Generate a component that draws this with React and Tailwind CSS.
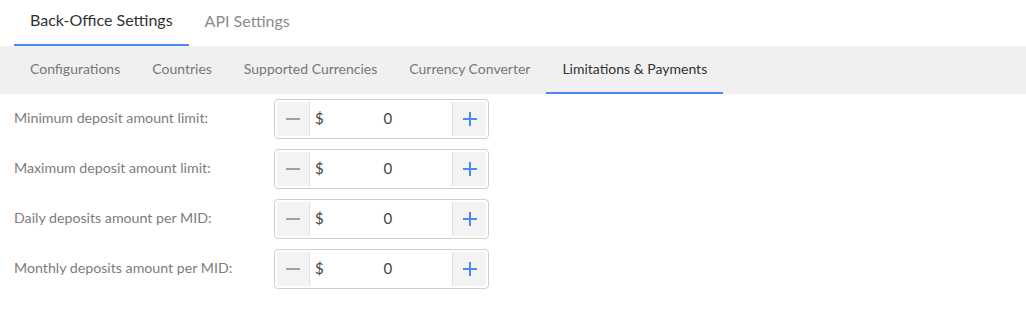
import React from "react";

const rows = [
  "Minimum deposit amount limit:",
  "Maximum deposit amount limit:",
  "Daily deposits amount per MID:",
  "Monthly deposits amount per MID:",
];

const subTabs = [
  "Configurations",
  "Countries",
  "Supported Currencies",
  "Currency Converter",
  "Limitations & Payments",
];

export default function App() {
  return (
    <div className="w-[1026px] h-[325px] bg-white font-['Lato',sans-serif]">
      <div className="flex px-[14px] h-[46px]">
        <div className="px-4 h-full flex items-center pb-[4px] border-b-2 border-[#4a89f3] text-[16px] text-[#333]">
          Back-Office Settings
        </div>
        <div className="px-4 h-full flex items-center pb-[4px] text-[16px] text-[#8a8a8a]">
          API Settings
        </div>
      </div>
      <div className="flex px-[14px] h-[48px] bg-[#f0f0f0]">
        {subTabs.map((t, i) => (
          <div
            key={t}
            className={
              i === 4
                ? "px-4 h-full flex items-center pb-[1px] border-b-2 border-[#4a89f3] text-[14px] text-[#333]"
                : "px-4 h-full flex items-center pb-[1px] border-b-2 border-transparent text-[14px] text-[#777]"
            }
          >
            {t}
          </div>
        ))}
      </div>
      <div className="flex flex-col gap-[10px] pt-[5px] pl-[14px]">
        {rows.map((r) => (
          <div key={r} className="flex items-center h-[40px]">
            <div className="w-[260px] text-[14.2px] text-[#7c7c7c] pb-[2px]">{r}</div>
            <div className="flex h-[40px] w-[215px] border border-[#cfcfcf] rounded-[4px] overflow-hidden p-[2px]">
              <div className="w-[33px] h-full bg-[#f3f3f3] border-r border-[#e2e2e2] flex items-center justify-center rounded-l-[2px]">
                <div className="w-[14px] h-[2px] bg-[#a0a0a0]" />
              </div>
              <div className="flex-1 flex items-center text-[15px] text-[#444] pl-[5px] pb-[2px]">
                <span>$</span>
                <span className="flex-1 text-center">0</span>
              </div>
              <div className="w-[34px] h-full bg-[#f3f3f3] border-l border-[#e2e2e2] flex items-center justify-center rounded-r-[2px]">
                <svg width="16" height="16" viewBox="0 0 16 16">
                  <path d="M8 1v14M1 8h14" stroke="#4a89f3" strokeWidth="2" />
                </svg>
              </div>
            </div>
          </div>
        ))}
      </div>
    </div>
  );
}
